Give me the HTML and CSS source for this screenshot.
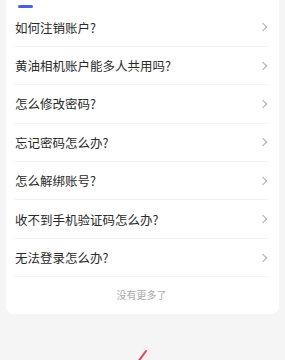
FILE: index.html
```html
<!DOCTYPE html>
<html lang="zh-CN">
<head>
  <meta charset="UTF-8">
  <meta name="viewport" content="width=device-width, initial-scale=1.0">
  <title>常见问题</title>
  <link rel="stylesheet" href="styles.css">
</head>
<body>

  <div class="faq-card">
    <div class="tab-line"></div>
    <ul class="faq-list">
      <li class="faq-item"><span>如何注销账户?</span><i class="chevron"></i></li>
      <li class="faq-item"><span>黄油相机账户能多人共用吗?</span><i class="chevron"></i></li>
      <li class="faq-item"><span>怎么修改密码?</span><i class="chevron"></i></li>
      <li class="faq-item"><span>忘记密码怎么办?</span><i class="chevron"></i></li>
      <li class="faq-item"><span>怎么解绑账号?</span><i class="chevron"></i></li>
      <li class="faq-item"><span>收不到手机验证码怎么办?</span><i class="chevron"></i></li>
      <li class="faq-item"><span>无法登录怎么办?</span><i class="chevron"></i></li>
    </ul>
    <p class="no-more">没有更多了</p>
  </div>

  <div class="feedback-btn">
    <svg width="24" height="24" viewBox="0 0 24 24">
      <circle cx="16" cy="6" r="5" fill="#fbeeee"/>
      <path d="M4 19 L15 4" stroke="#e0455a" stroke-width="2" stroke-linecap="round"/>
    </svg>
  </div>

</body>
</html>
```

FILE: styles.css
```css
body, html {
  margin: 0;
  padding: 0;
  background: #f5f5f5;
  font-family: "Noto Sans CJK SC", "Noto Sans", sans-serif;
  height: 360px;
  overflow: hidden;
}

/* Card */
.faq-card {
  background: #fff;
  margin: 0 6px;
  padding: 5px 11px 0 9px;
  border-radius: 0 0 8px 8px;
}

.tab-line {
  width: 15px;
  height: 2.5px;
  margin-left: 3px;
  border-radius: 2px;
  background: #4d5fe0;
}

.faq-list {
  list-style: none;
  margin: 0;
  padding: 0;
  padding-top: 1px;
}

.faq-item {
  display: flex;
  align-items: center;
  justify-content: space-between;
  height: 38.4px;
  box-sizing: border-box;
  border-bottom: 1px solid #f0f0f0;
  font-size: 12.5px;
  color: #2a2a2a;
}

.chevron {
  width: 5px;
  height: 5px;
  margin-right: 2px;
  border-top: 1px solid #aaa;
  border-right: 1px solid #aaa;
  transform: rotate(45deg);
}

.no-more {
  margin: 0;
  padding: 10px 0 12px;
  text-align: center;
  font-size: 10px;
  color: #aaa;
}

/* Floating button peeking at the bottom */
.feedback-btn {
  display: flex;
  justify-content: center;
  margin-top: 33px;
}
```
